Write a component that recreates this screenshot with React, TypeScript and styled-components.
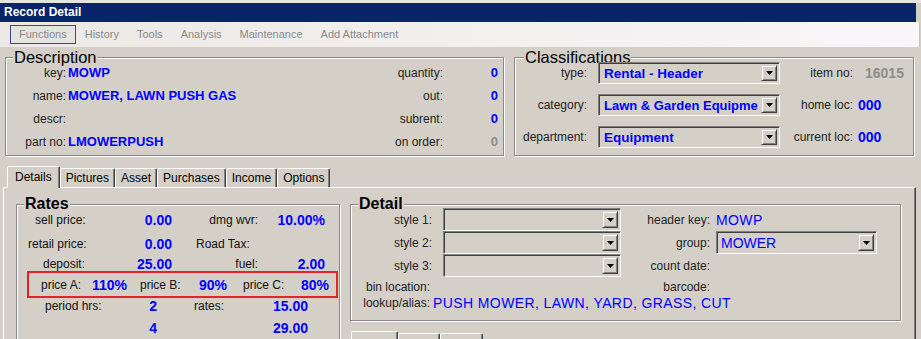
import React from "react";
import styled, { createGlobalStyle } from "styled-components";

const SANS = `"Liberation Sans", Arial, sans-serif`;
const BLUE = "#0000ff";
const FACE = "#d4d0c8";

const Global = createGlobalStyle`
  html, body { margin: 0; padding: 0; background: ${FACE}; }
  body { font-family: ${SANS}; color: #000; }
  * { box-sizing: border-box; }
`;

const Screen = styled.div`
  width: 921px;
  height: 339px;
  overflow: hidden;
  background: ${FACE};
  border-top: 3px solid #e6e4e0;
  display: flex;
  flex-direction: column;
`;

const TitleBar = styled.div`
  width: 916px;
  height: 19px;
  flex: none;
  background: #0a246a;
  color: #fff;
  font: bold 12px/19px ${SANS};
  padding-left: 4px;
`;

const MenuBar = styled.nav`
  width: 920px;
  height: 25px;
  flex: none;
  display: flex;
  align-items: center;
  padding-left: 10px;
  background: linear-gradient(to right, #ebe8e5, #f9f6f9);
  border-right: 1px solid #c4c2be;
`;

const MenuItem = styled.span<{ $boxed?: boolean }>`
  font: 11px ${SANS};
  color: #8a8a8a;
  height: 19px;
  line-height: ${(p) => (p.$boxed ? 17 : 19)}px;
  padding: 0 ${(p) => (p.$boxed ? 8 : 9)}px;
  border: ${(p) => (p.$boxed ? "1px solid #3b4b84" : "none")};
  background: ${(p) => (p.$boxed ? "#e6e4e1" : "transparent")};
  white-space: nowrap;
`;

const Body = styled.main`
  flex: 1;
  display: flex;
  flex-direction: column;
  padding-top: 6px;
`;

const TopRow = styled.div`
  display: grid;
  grid-template-columns: 499px 400px;
  column-gap: 10px;
  padding-left: 5px;
  align-items: start;
`;

const Group = styled.fieldset<{ $w?: number }>`
  margin: 0;
  padding: 0;
  min-width: 0;
  width: ${(p) => (p.$w ? `${p.$w}px` : "auto")};
  border: 1px solid #8a8884;
  box-shadow: 1px 1px 0 #fff, inset 1px 1px 0 #fff;
`;

const Legend = styled.legend<{ $bold?: boolean; $ml?: number }>`
  margin-left: ${(p) => p.$ml ?? 7}px;
  padding: 0 1px;
  font-family: ${SANS};
  font-size: ${(p) => (p.$bold ? 16 : 16.5)}px;
  font-weight: ${(p) => (p.$bold ? 700 : 400)};
  line-height: 8px;
  background: ${FACE};
  color: #000;
`;

/* ---------- Description ---------- */
const DescGrid = styled.div`
  display: grid;
  grid-template-columns: 61px 1fr auto 55px;
  grid-auto-rows: 23px;
  align-items: center;
  padding: 0 5px 2px 0;
`;

const FormLabel = styled.span<{ $pr?: number; $pl?: number; $left?: boolean }>`
  font: 12px ${SANS};
  color: #222;
  text-align: ${(p) => (p.$left ? "left" : "right")};
  padding-right: ${(p) => p.$pr ?? 0}px;
  padding-left: ${(p) => p.$pl ?? 0}px;
  white-space: nowrap;
`;

const BoldValue = styled.span<{ $size?: number; $gray?: boolean; $right?: boolean; $pl?: number; $pr?: number }>`
  font-family: ${SANS};
  font-weight: 700;
  font-size: ${(p) => p.$size ?? 13}px;
  color: ${(p) => (p.$gray ? "#8c8c8c" : BLUE)};
  text-align: ${(p) => (p.$right ? "right" : "left")};
  padding-left: ${(p) => p.$pl ?? 0}px;
  padding-right: ${(p) => p.$pr ?? 0}px;
  white-space: nowrap;
`;

const PlainValue = styled.span<{ $pl?: number; $span?: string }>`
  font: 14px ${SANS};
  color: ${BLUE};
  letter-spacing: 0.4px;
  padding-left: ${(p) => p.$pl ?? 0}px;
  grid-column: ${(p) => p.$span ?? "auto"};
  white-space: nowrap;
`;

/* ---------- Select (combo box) ---------- */
const Select = styled.div<{ $w: number; $h?: number; $ml?: number }>`
  width: ${(p) => p.$w}px;
  height: ${(p) => p.$h ?? 23}px;
  margin-left: ${(p) => p.$ml ?? 0}px;
  display: flex;
  align-items: stretch;
  padding: 2px;
  border: 1px solid;
  border-color: #808080 #fff #fff #808080;
  box-shadow: inset 1px 1px 0 #404040, inset -1px -1px 0 ${FACE};
  background: ${FACE};
`;

const SelectText = styled.span<{ $bold?: boolean; $size?: number }>`
  flex: 1;
  min-width: 0;
  overflow: hidden;
  white-space: nowrap;
  padding-left: ${(p) => (p.$bold ? 3 : 2)}px;
  font-family: ${SANS};
  font-size: ${(p) => p.$size ?? 14}px;
  font-weight: ${(p) => (p.$bold ? 700 : 400)};
  color: ${BLUE};
  display: flex;
  align-items: center;
`;

const DropButton = styled.span`
  width: 16px;
  flex: none;
  display: flex;
  align-items: center;
  justify-content: center;
  border: 1px solid;
  border-color: ${FACE} #404040 #404040 ${FACE};
  box-shadow: inset 1px 1px 0 #fff, inset -1px -1px 0 #808080;
  background: ${FACE};
`;

const Arrow = () => (
  <svg width="7" height="4" viewBox="0 0 7 4">
    <polygon points="0,0 7,0 3.5,4" fill="#000" />
  </svg>
);

const Combo: React.FC<{ w: number; h?: number; ml?: number; text?: string; bold?: boolean; size?: number }> = ({
  w,
  h,
  ml,
  text,
  bold,
  size,
}) => (
  <Select $w={w} $h={h} $ml={ml}>
    <SelectText $bold={bold} $size={size}>
      {text}
    </SelectText>
    <DropButton>
      <Arrow />
    </DropButton>
  </Select>
);

/* ---------- Classifications ---------- */
const ClassGrid = styled.div`
  display: grid;
  grid-template-columns: 77px 188px 75px 1fr;
  grid-auto-rows: 24px;
  row-gap: 8px;
  align-items: center;
  padding-bottom: 6px;
`;

/* ---------- Tabs ---------- */
const TabArea = styled.section`
  margin: 10px 5px 0 3px;
  flex: 1;
  display: flex;
  flex-direction: column;
`;

const TabStrip = styled.div`
  display: flex;
  align-items: flex-end;
  height: 21px;
  padding-left: 4px;
`;

const Tab = styled.div<{ $active?: boolean }>`
  position: relative;
  z-index: ${(p) => (p.$active ? 1 : 0)};
  height: ${(p) => (p.$active ? 22 : 19)}px;
  margin-bottom: ${(p) => (p.$active ? -1 : 0)}px;
  padding: 0 ${(p) => (p.$active ? 7 : 5)}px;
  border: 1px solid;
  border-bottom: none;
  border-color: #fff #404040 transparent #fff;
  box-shadow: inset -1px 0 0 #808080;
  border-radius: 2px 2px 0 0;
  background: ${FACE};
  font: 12px ${SANS};
  line-height: ${(p) => (p.$active ? 20 : 18)}px;
  white-space: nowrap;
`;

const TabPanel = styled.div`
  flex: 1;
  display: flex;
  align-items: flex-start;
  gap: 10px;
  padding: 12px 13px 0 12px;
  border-top: 1px solid #fff;
  border-left: 1px solid #fff;
  border-right: 1px solid #404040;
  box-shadow: inset -1px 0 0 #808080;
`;

/* ---------- Rates ---------- */
const RatesBody = styled.div`
  display: grid;
  grid-template-rows: 24px 24px 15px 27px 16px 28px;
`;

const RateRow = styled.div`
  display: grid;
  grid-template-columns: 73px 82px 86px 67px;
  align-items: center;
`;

const RedBox = styled.div`
  margin: 0 1px 0 10px;
  border: 2px solid #e3232b;
  display: grid;
  grid-template-columns: 51px 48px 59px 44px 58px 1fr;
  align-items: center;
  padding-left: 12px;
`;

const RateLabel = styled.span<{ $pl?: number; $right?: boolean }>`
  font: 12px ${SANS};
  color: #111;
  padding-left: ${(p) => p.$pl ?? 0}px;
  text-align: ${(p) => (p.$right ? "right" : "left")};
  white-space: nowrap;
`;

const RateValue = styled.span<{ $pr?: number; $left?: boolean }>`
  font: bold 14px ${SANS};
  color: ${BLUE};
  text-align: ${(p) => (p.$left ? "left" : "right")};
  padding-right: ${(p) => p.$pr ?? 0}px;
  white-space: nowrap;
`;

/* ---------- Detail ---------- */
const RightColumn = styled.div`
  display: flex;
  flex-direction: column;
`;

const DetailGrid = styled.div`
  display: grid;
  grid-template-columns: 82px 189px 90px 1fr;
  grid-template-rows: 23px 23px 23px 19px 14px;
  align-items: center;
  padding-bottom: 10px;
`;

const SubTabs = styled.div`
  display: flex;
  align-items: flex-start;
  margin: 10px 0 0 1px;
`;

const SubTab = styled.div<{ $w: number; $active?: boolean }>`
  width: ${(p) => p.$w}px;
  height: 20px;
  margin-top: ${(p) => (p.$active ? 0 : 2)}px;
  border: 1px solid;
  border-bottom: none;
  border-color: #fff #404040 transparent #fff;
  box-shadow: inset -1px 0 0 #808080;
  border-radius: 2px 2px 0 0;
`;

export default function App() {
  return (
    <>
      <Global />
      <Screen>
        <TitleBar>Record Detail</TitleBar>
        <MenuBar>
          <MenuItem $boxed>Functions</MenuItem>
          <MenuItem>History</MenuItem>
          <MenuItem>Tools</MenuItem>
          <MenuItem>Analysis</MenuItem>
          <MenuItem>Maintenance</MenuItem>
          <MenuItem>Add Attachment</MenuItem>
        </MenuBar>
        <Body>
          <TopRow>
            <Group>
              <Legend>Description</Legend>
              <DescGrid>
                <FormLabel $pr={1}>key:</FormLabel>
                <BoldValue $pl={1}>MOWP</BoldValue>
                <FormLabel>quantity:</FormLabel>
                <BoldValue $right>0</BoldValue>

                <FormLabel $pr={1}>name:</FormLabel>
                <BoldValue $pl={1}>MOWER, LAWN PUSH GAS</BoldValue>
                <FormLabel>out:</FormLabel>
                <BoldValue $right>0</BoldValue>

                <FormLabel $pr={1}>descr:</FormLabel>
                <BoldValue $pl={1}></BoldValue>
                <FormLabel>subrent:</FormLabel>
                <BoldValue $right>0</BoldValue>

                <FormLabel $pr={1}>part no:</FormLabel>
                <BoldValue $pl={1}>LMOWERPUSH</BoldValue>
                <FormLabel>on order:</FormLabel>
                <BoldValue $right $gray>
                  0
                </BoldValue>
              </DescGrid>
            </Group>

            <Group>
              <Legend $ml={9}>Classifications</Legend>
              <ClassGrid>
                <FormLabel $pr={5}>type:</FormLabel>
                <Combo w={182} h={22} ml={6} text="Rental - Header" bold size={13.5} />
                <FormLabel $pr={2}>item no:</FormLabel>
                <BoldValue $size={14} $gray $pl={10}>
                  16015
                </BoldValue>

                <FormLabel $pr={5}>category:</FormLabel>
                <Combo w={182} h={22} ml={6} text="Lawn & Garden Equipme" bold size={13} />
                <FormLabel $pr={2}>home loc:</FormLabel>
                <BoldValue $size={14} $pl={3}>
                  000
                </BoldValue>

                <FormLabel $pr={5}>department:</FormLabel>
                <Combo w={182} h={22} ml={6} text="Equipment" bold size={13.5} />
                <FormLabel $pr={2}>current loc:</FormLabel>
                <BoldValue $size={14} $pl={3}>
                  000
                </BoldValue>
              </ClassGrid>
            </Group>
          </TopRow>

          <TabArea>
            <TabStrip>
              <Tab $active>Details</Tab>
              <Tab>Pictures</Tab>
              <Tab>Asset</Tab>
              <Tab>Purchases</Tab>
              <Tab>Income</Tab>
              <Tab>Options</Tab>
            </TabStrip>
            <TabPanel>
              <Group $w={324}>
                <Legend $bold>Rates</Legend>
                <RatesBody>
                  <RateRow>
                    <RateLabel $pl={18}>sell price:</RateLabel>
                    <RateValue>0.00</RateValue>
                    <RateLabel $right>dmg wvr:</RateLabel>
                    <RateValue>10.00%</RateValue>
                  </RateRow>
                  <RateRow>
                    <RateLabel $pl={11}>retail price:</RateLabel>
                    <RateValue>0.00</RateValue>
                    <RateLabel $pl={24}>Road Tax:</RateLabel>
                    <RateValue></RateValue>
                  </RateRow>
                  <RateRow>
                    <RateLabel $pl={26}>deposit:</RateLabel>
                    <RateValue>25.00</RateValue>
                    <RateLabel $right>fuel:</RateLabel>
                    <RateValue>2.00</RateValue>
                  </RateRow>
                  <RedBox>
                    <RateLabel>price A:</RateLabel>
                    <RateValue $left>110%</RateValue>
                    <RateLabel>price B:</RateLabel>
                    <RateValue $left>90%</RateValue>
                    <RateLabel>price C:</RateLabel>
                    <RateValue $left>80%</RateValue>
                  </RedBox>
                  <RateRow>
                    <RateLabel $pl={28}>period hrs:</RateLabel>
                    <RateValue $pr={15}>2</RateValue>
                    <RateLabel $pl={22}>rates:</RateLabel>
                    <RateValue $pr={17}>15.00</RateValue>
                  </RateRow>
                  <RateRow>
                    <RateLabel></RateLabel>
                    <RateValue $pr={15}>4</RateValue>
                    <RateLabel></RateLabel>
                    <RateValue $pr={17}>29.00</RateValue>
                  </RateRow>
                </RatesBody>
              </Group>

              <RightColumn>
                <Group $w={551}>
                  <Legend $bold>Detail</Legend>
                  <DetailGrid>
                    <FormLabel $pr={1}>style 1:</FormLabel>
                    <Combo w={178} ml={10} />
                    <FormLabel $pr={2}>header key:</FormLabel>
                    <PlainValue $pl={4}>MOWP</PlainValue>

                    <FormLabel $pr={1}>style 2:</FormLabel>
                    <Combo w={178} ml={10} />
                    <FormLabel $pr={2}>group:</FormLabel>
                    <Combo w={161} ml={4} text="MOWER" />

                    <FormLabel $pr={1}>style 3:</FormLabel>
                    <Combo w={178} ml={10} />
                    <FormLabel $pr={2}>count date:</FormLabel>
                    <span />

                    <FormLabel $pr={3}>bin location:</FormLabel>
                    <span />
                    <FormLabel $pr={2}>barcode:</FormLabel>
                    <span />

                    <FormLabel $pr={3}>lookup/alias:</FormLabel>
                    <PlainValue $span="2 / 5">PUSH MOWER, LAWN, YARD, GRASS, CUT</PlainValue>
                  </DetailGrid>
                </Group>
                <SubTabs>
                  <SubTab $w={47} $active />
                  <SubTab $w={42} />
                  <SubTab $w={43} />
                </SubTabs>
              </RightColumn>
            </TabPanel>
          </TabArea>
        </Body>
      </Screen>
    </>
  );
}
